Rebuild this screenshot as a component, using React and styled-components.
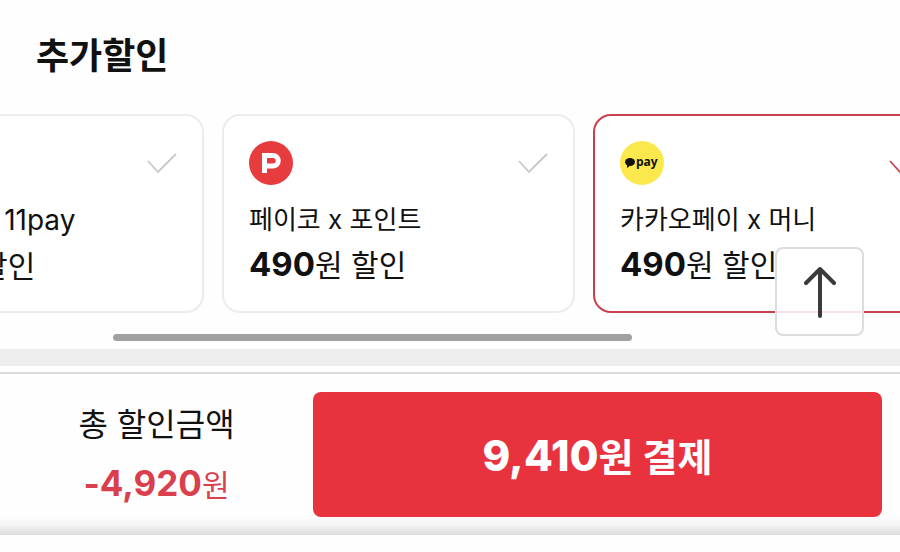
import React, { useLayoutEffect, useRef, useState } from 'react';
import styled, { createGlobalStyle } from 'styled-components';

const GlobalStyle = createGlobalStyle`
    * {
        box-sizing: border-box;
    }
    body {
        margin: 0;
        background: #fefefe;
        color: #111;
        font-family: Inter, "Noto Sans CJK KR", sans-serif;
        overflow-x: hidden;
    }
    button {
        font-family: inherit;
        cursor: pointer;
    }
`;

const Section = styled.section`
    position: relative;
    padding: 31px 0 8px;
    border-bottom: 17px solid #eee;
`;

const Title = styled.h2`
    margin: 0 0 33px;
    padding: 0 36px;
    font-size: 36px;
    font-weight: 700;
    line-height: 50px;
`;

const CardList = styled.div`
    display: flex;
    gap: 18px;
    padding: 0 36px;
    overflow-x: auto;
    scrollbar-width: none;
`;

const Card = styled.label`
    position: relative;
    flex: 0 0 353px;
    padding: 25px 25px 23px;
    border: 2px solid ${props => props.$checked ? '#c9404f' : '#ececec'};
    border-radius: 18px;
    background: #fff;
    white-space: nowrap;
    cursor: pointer;
`;

const Radio = styled.input`
    position: absolute;
    inset: 0;
    margin: 0;
    opacity: 0;
`;

const CardTop = styled.div`
    display: flex;
    justify-content: space-between;
    align-items: center;
    margin-bottom: 13px;
    color: ${props => props.$checked ? '#c9404f' : '#c8c8c8'};
`;

const CardName = styled.div`
    font-size: 26px;
    line-height: 44px;
`;

const Latin = styled.span`
    font-size: 28px;
`;

const CardPrice = styled.div`
    font-size: 30px;
    line-height: 44px;
    strong {
        font-size: 33px;
        font-weight: 700;
    }
`;

const ScrollBar = styled.div`
    margin-top: 21px;
    padding: 0 113px;
`;

const Thumb = styled.div`
    width: 77%;
    height: 7px;
    border-radius: 4px;
    background: #a1a1a1;
`;

const TopButton = styled.button`
    position: absolute;
    right: 36px;
    bottom: 13px;
    display: flex;
    justify-content: center;
    align-items: center;
    width: 89px;
    height: 89px;
    padding: 0;
    border: 2px solid #dcdcdc;
    border-radius: 8px;
    background: rgba(255, 255, 255, 0.85);
    color: #3a3a3a;
`;

const PayBar = styled.footer`
    display: grid;
    grid-template-columns: 313px 1fr;
    align-items: center;
    margin-top: 6px;
    padding: 18px 18px 18px 0;
    border-top: 2px solid #d9dade;
    background: linear-gradient(to top, #dcdcdc, #f4f4f4 10px, #fefefe 20px);
`;

const Summary = styled.div`
    text-align: center;
`;

const SummaryLabel = styled.div`
    font-size: 32px;
    line-height: 58px;
`;

const SummaryPrice = styled.div`
    color: #d93f4d;
    font-size: 30px;
    line-height: 58px;
    strong {
        font-size: 35px;
        font-weight: 700;
    }
`;

const PayButton = styled.button`
    height: 125px;
    border: 0;
    border-radius: 8px;
    background: #e8333f;
    color: #fff;
    font-size: 38px;
    font-weight: 700;
    strong {
        font-size: 42px;
        font-weight: 800;
    }
`;

const PaycoLogo = () => (
    <svg width="44" height="44" viewBox="0 0 44 44" aria-hidden="true">
        <circle cx="22" cy="22" r="22" fill="#e73c3e" />
        <path
            d="M15.5 32V14.5H24A5 5 0 0 1 24 25H15.5"
            fill="none"
            stroke="#fff"
            strokeWidth="5"
        />
    </svg>
);

const KakaoPayLogo = () => (
    <svg width="44" height="44" viewBox="0 0 44 44" aria-hidden="true">
        <circle cx="22" cy="22" r="22" fill="#fae84c" />
        <ellipse cx="10" cy="21" rx="5" ry="4" fill="#111" />
        <path d="M7 23L7 27L11 24Z" fill="#111" />
        <text x="16" y="25" fontFamily="Open Sans" fontSize="12" fontWeight="700" fill="#111">pay</text>
    </svg>
);

const CheckIcon = () => (
    <svg width="30" height="20" viewBox="0 0 30 20" aria-hidden="true">
        <path d="M1 8L11 19L29 1" fill="none" stroke="currentColor" strokeWidth="1.8" />
    </svg>
);

const ArrowIcon = () => (
    <svg width="32" height="52" viewBox="0 0 32 52" aria-hidden="true">
        <path
            d="M16 50V3M2 17L16 3L30 17"
            fill="none"
            stroke="currentColor"
            strokeWidth="4"
            strokeLinecap="round"
            strokeLinejoin="round"
        />
    </svg>
);

const discounts = [
    { id: 'card', name: <>신한카드 <Latin>x 11pay</Latin></>, price: '490', logo: null },
    { id: 'payco', name: '페이코 x 포인트', price: '490', logo: <PaycoLogo /> },
    { id: 'kakao', name: '카카오페이 x 머니', price: '490', logo: <KakaoPayLogo /> },
];

const DiscountCard = ({ discount, checked, onChange }) => (
    <Card $checked={checked}>
        <Radio
            type="radio"
            name="discount"
            value={discount.id}
            checked={checked}
            onChange={onChange}
        />
        <CardTop $checked={checked}>
            {discount.logo || <svg width="44" height="44" aria-hidden="true" />}
            <CheckIcon />
        </CardTop>
        <CardName>{discount.name}</CardName>
        <CardPrice><strong>{discount.price}</strong>원 할인</CardPrice>
    </Card>
);

export default function App() {
    const [selected, setSelected] = useState('kakao');
    const list = useRef(null);

    // start with the second card in view
    useLayoutEffect(() => {
        list.current.scrollLeft = 185;
    }, []);

    return (
        <>
            <GlobalStyle />
            <main>
                <Section>
                    <Title>추가할인</Title>
                    <CardList ref={list}>
                        {discounts.map(discount => (
                            <DiscountCard
                                key={discount.id}
                                discount={discount}
                                checked={selected === discount.id}
                                onChange={() => setSelected(discount.id)}
                            />
                        ))}
                    </CardList>
                    <ScrollBar><Thumb /></ScrollBar>
                    <TopButton
                        type="button"
                        aria-label="맨 위로"
                        onClick={() => window.scrollTo(0, 0)}
                    >
                        <ArrowIcon />
                    </TopButton>
                </Section>
            </main>
            <PayBar>
                <Summary>
                    <SummaryLabel>총 할인금액</SummaryLabel>
                    <SummaryPrice><strong>-4,920</strong>원</SummaryPrice>
                </Summary>
                <PayButton type="button"><strong>9,410</strong>원 결제</PayButton>
            </PayBar>
        </>
    );
}
